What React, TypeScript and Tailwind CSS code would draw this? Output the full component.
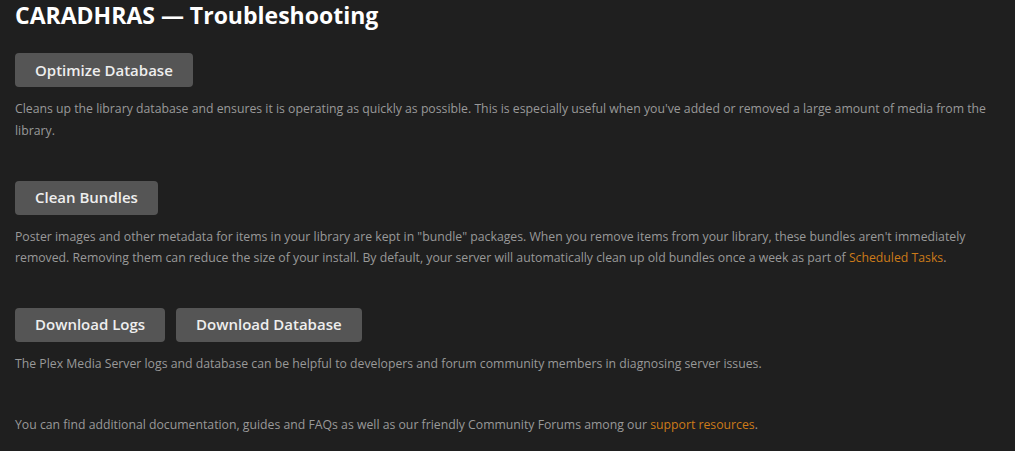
import React from "react";

const font = { fontFamily: '"Open Sans", "Noto Sans", sans-serif' };

function Btn({ children }: { children: React.ReactNode }) {
  return (
    <button
      type="button"
      className="h-[34px] rounded-[4px] bg-[#555555] px-5 text-[15px] font-semibold text-[#eeeeee]"
    >
      {children}
    </button>
  );
}

function Desc({ children }: { children: React.ReactNode }) {
  return <p className="m-0 mt-[11px] text-[12.25px] leading-[21.5px] text-[#999999]">{children}</p>;
}

function Link({ children }: { children: React.ReactNode }) {
  return <a className="text-[#cc7b19]">{children}</a>;
}

export default function App() {
  return (
    <div className="min-h-[451px] w-full bg-[#1f1f1f] px-[15px]" style={font}>
      <h1 className="m-0 text-[23px] font-bold leading-[30px] text-white">CARADHRAS — Troubleshooting</h1>

      <section className="mt-[23px]">
        <Btn>Optimize Database</Btn>
        <Desc>
          Cleans up the library database and ensures it is operating as quickly as possible. This is especially useful when you've added or removed a large amount of media from the library.
        </Desc>
      </section>

      <section className="mt-[39.5px]">
        <Btn>Clean Bundles</Btn>
        <Desc>
          Poster images and other metadata for items in your library are kept in "bundle" packages. When you remove items from your library, these bundles aren't immediately removed. Removing them can reduce the size of your install. By default, your server will automatically clean up old bundles once a week as part of <Link>Scheduled Tasks</Link>.
        </Desc>
      </section>

      <section className="mt-[39px]">
        <div className="flex gap-[11px]">
          <Btn>Download Logs</Btn>
          <Btn>Download Database</Btn>
        </div>
        <Desc>The Plex Media Server logs and database can be helpful to developers and forum community members in diagnosing server issues.</Desc>
      </section>

      <p className="m-0 mt-[40px] text-[12.25px] leading-[21.5px] text-[#999999]">
        You can find additional documentation, guides and FAQs as well as our friendly Community Forums among our <Link>support resources</Link>.
      </p>
    </div>
  );
}
